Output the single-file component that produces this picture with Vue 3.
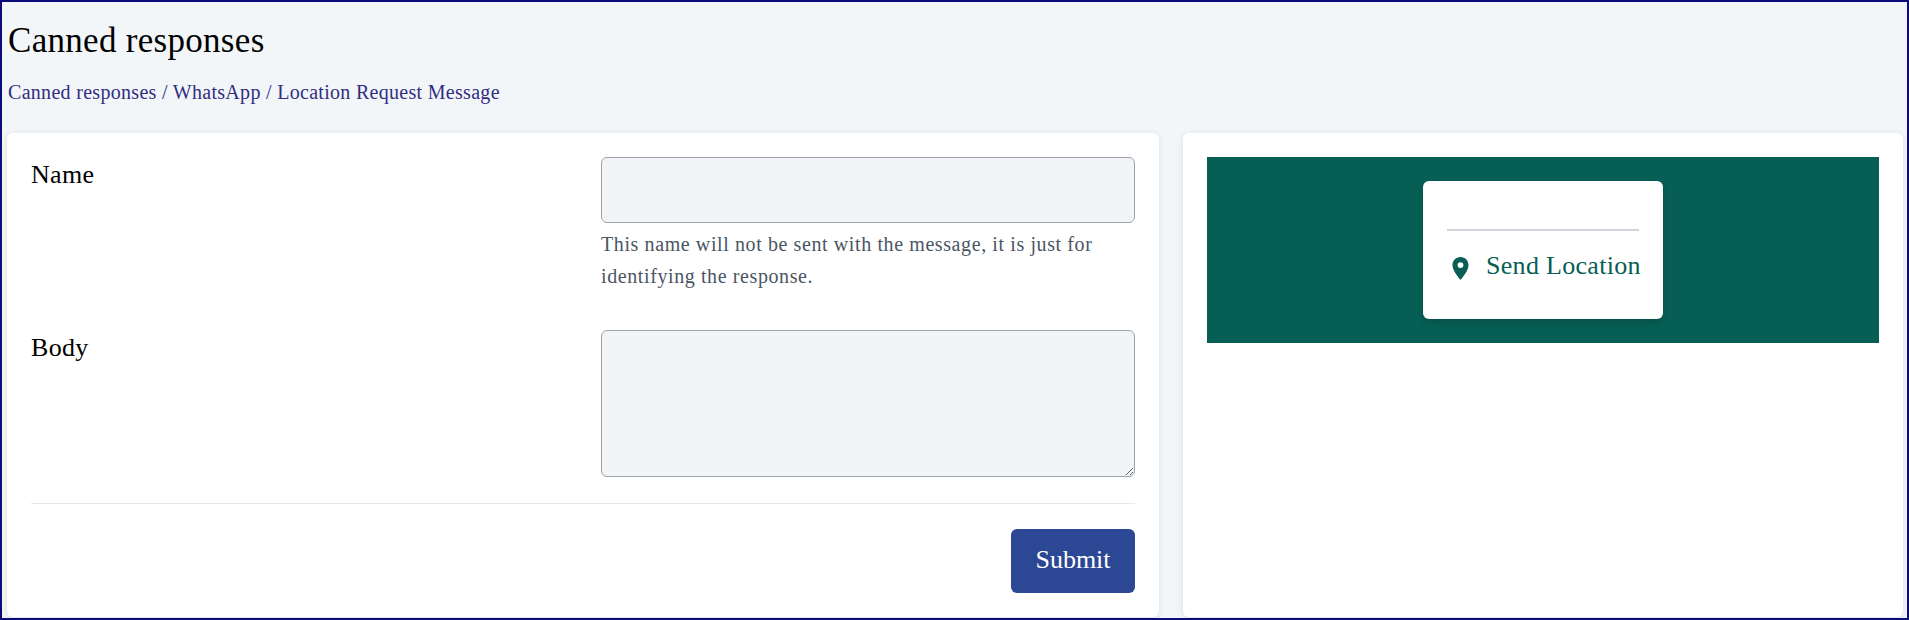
<script setup>
const crumbs = 'Canned responses / WhatsApp / Location Request Message'
</script>

<template>
  <div class="page">
    <header class="head">
      <h1>Canned responses</h1>
      <nav class="crumbs">{{ crumbs }}</nav>
    </header>
    <main class="cols">
      <section class="card form">
        <div class="field">
          <label>Name</label>
          <div class="ctl">
            <input type="text" />
            <p class="help">This name will not be sent with the message, it is just for identifying the response.</p>
          </div>
        </div>
        <div class="field body">
          <label>Body</label>
          <div class="ctl"><textarea></textarea></div>
        </div>
        <div class="actions"><button type="button">Submit</button></div>
      </section>
      <section class="card preview">
        <div class="stage">
          <div class="bubble">
            <div class="rule"></div>
            <div class="loc">
              <svg viewBox="5 2 14 20" width="17" height="23"><path fill="#075e54" d="M12 2C8.13 2 5 5.13 5 9c0 5.25 7 13 7 13s7-7.75 7-13c0-3.87-3.13-7-7-7zm0 9.5a2.5 2.5 0 010-5 2.5 2.5 0 010 5z"/></svg>
              <span>Send Location</span>
            </div>
          </div>
        </div>
      </section>
    </main>
  </div>
</template>

<style scoped>
.page { box-sizing: border-box; width: 1909px; height: 620px; border: 2px solid #0b0b7a; background: #f3f6f9; overflow: hidden; font-family: "Liberation Serif", serif; color: #000; }
.head { height: 131px; padding: 0 6px; box-sizing: border-box; }
h1 { margin: 0; padding-top: 19px; font-size: 35px; line-height: 40px; font-weight: 400; letter-spacing: .3px; }
.crumbs { margin-top: 18px; font-size: 20px; line-height: 26px; color: #312e81; letter-spacing: .3px; }
.cols { display: flex; gap: 24px; padding: 0 4px 0 5px; }
.card { background: #fff; border-radius: 6px; height: 484px; box-shadow: 0 1px 6px rgba(0,0,0,.1); box-sizing: border-box; }
.form { width: 1152px; padding: 24px 24px 0 24px; }
.preview { width: 720px; padding: 24px 24px 0; }
.field { display: grid; grid-template-columns: 1fr 534px; column-gap: 36px; }
.field label { font-size: 26px; line-height: 36px; letter-spacing: .3px; }
input, textarea { display: block; box-sizing: border-box; width: 100%; background: #f3f4f6; border: 1px solid #9ca3af; border-radius: 6px; margin: 0; }
input { height: 66px; }
textarea { height: 147px; }
.help { margin: 5px 0 0; font-size: 20px; line-height: 32px; color: #4b5563; letter-spacing: .6px; }
.field.body { margin-top: 38px; }
.actions { margin-top: 26px; border-top: 1px solid #e5e7eb; padding-top: 25px; display: flex; justify-content: flex-end; }
button { width: 124px; height: 64px; padding: 0 0 3px; background: #2c4793; color: #fff; border: 0; border-radius: 6px; font: 26px "Liberation Serif", serif; }
.stage { height: 186px; background: #075e54; display: flex; justify-content: center; padding-top: 24px; box-sizing: border-box; }
.bubble { box-sizing: border-box; width: 240px; height: 138px; background: #fff; border-radius: 6px; padding: 48px 24px 0; box-shadow: 0 4px 6px rgba(0,0,0,.12); }
.rule { height: 2px; background: #d1d5db; }
.loc { display: flex; align-items: center; margin-top: 20px; padding-left: 5px; gap: 17px; color: #075e54; font-size: 26px; line-height: 30px; white-space: nowrap; letter-spacing: .3px; }
.loc svg { margin-top: 5px; flex: none; }
</style>
